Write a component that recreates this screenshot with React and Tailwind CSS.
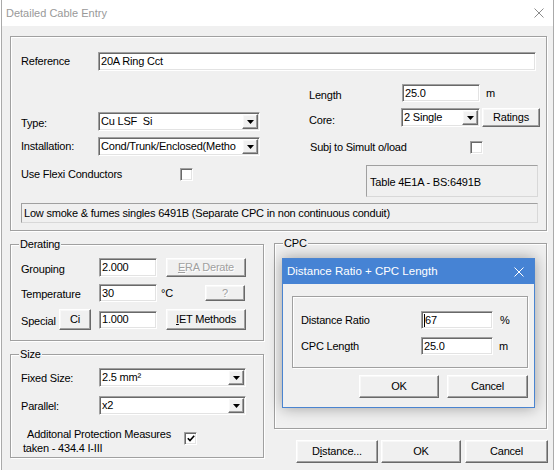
import React from 'react';

// classic win32 look: sunken fields, raised buttons, etched group boxes
const sunken =
  'bg-white border border-t-[#a0a0a0] border-l-[#a0a0a0] border-r-white border-b-white shadow-[inset_1px_1px_0_#696969,inset_-1px_-1px_0_#e3e3e3]';
const raised =
  'bg-[#f0f0f0] border border-t-white border-l-white border-r-[#696969] border-b-[#696969] shadow-[inset_-1px_-1px_0_#a0a0a0,inset_1px_1px_0_#f8f8f8]';
const etched = 'border border-[#a0a0a0] shadow-[inset_1px_1px_0_#ffffff,1px_1px_0_#ffffff]';
const staticEdge = 'border border-t-[#a0a0a0] border-l-[#a0a0a0] border-r-[#d8d8d8] border-b-[#d8d8d8]';

const Field = ({ className = '', children }) => (
  <div className={`flex items-center pl-[2px] whitespace-pre overflow-hidden shrink-0 ${sunken} ${className}`}>
    {children}
  </div>
);

const Btn = ({ className = '', disabled, children }) => (
  <div
    className={`flex items-center justify-center shrink-0 whitespace-nowrap ${raised} ${
      disabled ? 'text-[#a0a0a0] [text-shadow:1px_1px_0_#ffffff]' : ''
    } ${className}`}
  >
    {children}
  </div>
);

const Arrow = () => (
  <svg width="7" height="4" viewBox="0 0 7 4">
    <path d="M0 0h7L3.5 4z" fill="#000" />
  </svg>
);

const Combo = ({ className = '', children }) => (
  <div className={`flex p-[1px] shrink-0 ${sunken} ${className}`}>
    <div className="flex-1 flex items-center pl-[1px] whitespace-pre overflow-hidden">{children}</div>
    <div className={`w-[16px] flex items-center justify-center ${raised}`}>
      <Arrow />
    </div>
  </div>
);

const Check = ({ checked }) => (
  <div className={`w-[13px] h-[13px] shrink-0 flex items-center justify-center ${sunken}`}>
    {checked && (
      <svg width="8" height="7" viewBox="0 0 8 7">
        <path d="M0.8 3.2 L3 5.6 L7.2 0.8" stroke="#000" strokeWidth="1.6" fill="none" />
      </svg>
    )}
  </div>
);

const Group = ({ label, className = '', children }) => (
  <div className={`relative shrink-0 ${etched} ${className}`}>
    {label && (
      <span className="absolute left-[8px] top-[-7px] px-[1px] leading-[13px] bg-[#f0f0f0]">{label}</span>
    )}
    {children}
  </div>
);

const CloseX = ({ color }) => (
  <svg width="10" height="10" viewBox="0 0 10 10">
    <path d="M0.5 0.5 L9.5 9.5 M9.5 0.5 L0.5 9.5" stroke={color} strokeWidth="1" fill="none" />
  </svg>
);

// Distance Ratio popup sits over the CPC box
const DistancePopup = () => (
  <div className="absolute left-[282px] top-[258px] w-[253px] h-[150px] flex flex-col bg-[#f0f0f0] border border-[#4a84d0] shadow-[0_0_14px_rgba(0,0,0,0.35)]">
    <div className="h-[25px] shrink-0 flex items-center justify-between pl-[4px] pr-[10px] bg-[#4683d4] text-white text-[11.5px] tracking-normal">
      <span>Distance Ratio + CPC Length</span>
      <CloseX color="#ffffff" />
    </div>
    <Group className="mt-[12px] ml-[9px] w-[236px] h-[72px] pt-[14px] pl-[8px]">
      <div className="flex items-center h-[18px]">
        <span className="w-[120px]">Distance Ratio</span>
        <Field className="w-[72px] h-[18px]">
          <span className="w-[1px] h-[13px] bg-black" />
          67
        </Field>
        <span className="ml-[7px]">%</span>
      </div>
      <div className="flex items-center h-[18px] mt-[8px]">
        <span className="w-[120px]">CPC Length</span>
        <Field className="w-[72px] h-[18px]">25.0</Field>
        <span className="ml-[6px]">m</span>
      </div>
    </Group>
    <div className="flex mt-[7px] ml-[76px]">
      <Btn className="w-[80px] h-[23px]">OK</Btn>
      <Btn className="ml-[8px] w-[81px] h-[23px]">Cancel</Btn>
    </div>
  </div>
);

export default function App() {
  return (
    <div className="relative w-[555px] h-[470px] overflow-hidden bg-white text-[11px] leading-[13px] tracking-[-0.2px] text-black font-['Liberation_Sans',Arial,sans-serif]">
      <div className="ml-[1px] w-[553px] h-full flex flex-col border-x border-[#aaaaaa]">
        {/* title bar */}
        <div className="h-[26px] shrink-0 flex items-center justify-between pl-[4px] pr-[9px] text-[#999999] text-[11px] tracking-normal">
          <span>Detailed Cable Entry</span>
          <CloseX color="#8c8c8c" />
        </div>

        <div className="flex-1 bg-[#f0f0f0] pl-[8px] pt-[10px]">
          {/* cable details */}
          <Group className="w-[537px] h-[195px] pt-[15px] pl-[10px]">
            <div className="flex items-center h-[19px]">
              <span className="w-[77px]">Reference</span>
              <Field className="w-[438px] h-[19px]">20A Ring Cct</Field>
            </div>

            <div className="flex items-start">
              <div className="w-[239px] shrink-0">
                <div className="flex items-center h-[19px] mt-[41px]">
                  <span className="w-[77px] pt-[3px]">Type:</span>
                  <Combo className="w-[162px] h-[19px]">Cu LSF  Si</Combo>
                </div>
                <div className="flex items-center h-[19px] mt-[6px]">
                  <span className="w-[77px]">Installation:</span>
                  <Combo className="w-[162px] h-[19px]">Cond/Trunk/Enclosed(Metho</Combo>
                </div>
                <div className="flex items-center h-[13px] mt-[12px]">
                  <span className="w-[159px]">Use Flexi Conductors</span>
                  <Check />
                </div>
              </div>

              <div className="ml-[49px] w-[231px] shrink-0">
                <div className="flex items-center h-[18px] mt-[13px]">
                  <span className="w-[93px] pt-[5px]">Length</span>
                  <Field className="w-[78px] h-[18px]">25.0</Field>
                  <span className="ml-[6px]">m</span>
                </div>
                <div className="flex items-center h-[19px] mt-[6px]">
                  <span className="w-[93px] pt-[5px]">Core:</span>
                  <Combo className="w-[79px] h-[19px]">2 Single</Combo>
                  <Btn className="ml-[2px] w-[58px] h-[19px]">Ratings</Btn>
                </div>
                <div className="flex items-center h-[13px] mt-[14px]">
                  <span className="w-[161px] pl-[1px]">Subj to Simult o/load</span>
                  <Check />
                </div>
                <div className={`mt-[11px] ml-[57px] w-[172px] h-[32px] flex items-center pl-[3px] pt-[2px] ${staticEdge}`}>
                  Table 4E1A - BS:6491B
                </div>
              </div>
            </div>

            <div className={`mt-[6px] w-[517px] h-[20px] flex items-center pl-[2px] whitespace-nowrap ${staticEdge}`}>
              Low smoke &amp; fumes singles 6491B (Separate CPC in non continuous conduit)
            </div>
          </Group>

          <div className="flex">
            {/* left: derating + size */}
            <div className="w-[254px] shrink-0">
              <Group label="Derating" className="mt-[13px] w-[254px] h-[97px] pt-[13px] pl-[10px]">
                <div className="flex items-center h-[19px]">
                  <span className="w-[78px] pt-[3px]">Grouping</span>
                  <Field className="w-[58px] h-[19px]">2.000</Field>
                  <Btn disabled className="ml-[9px] w-[80px] h-[19px]">
                    <u>E</u>RA Derate
                  </Btn>
                </div>
                <div className="flex items-center h-[18px] mt-[7px]">
                  <span className="w-[78px] pt-[3px]">Temperature</span>
                  <Field className="w-[58px] h-[18px]">30</Field>
                  <span className="ml-[4px] w-[44px]">°C</span>
                  <Btn disabled className="w-[40px] h-[16px]">?</Btn>
                </div>
                <div className="flex items-center h-[21px] mt-[7px]">
                  <span className="w-[38px] pt-[3px]">Special</span>
                  <Btn className="w-[32px] h-[21px]">Ci</Btn>
                  <Field className="ml-[8px] w-[58px] h-[18px]">1.000</Field>
                  <Btn className="ml-[9px] w-[80px] h-[21px]">
                    <u>I</u>ET Methods
                  </Btn>
                </div>
              </Group>

              <Group label="Size" className="mt-[13px] w-[254px] h-[104px] pt-[13px] pl-[10px]">
                <div className="flex items-center h-[19px]">
                  <span className="w-[78px] pt-[2px]">Fixed Size:</span>
                  <Combo className="w-[147px] h-[19px]">2.5 mm²</Combo>
                </div>
                <div className="flex items-center h-[19px] mt-[9px]">
                  <span className="w-[78px] pt-[2px]">Parallel:</span>
                  <Combo className="w-[147px] h-[19px]">x2</Combo>
                </div>
                <div className="flex items-start mt-[12px]">
                  <div className="w-[163px] pl-[2px] leading-[14px]">
                    <div className="pl-[4px]">Additonal Protection Measures</div>
                    <div>taken - 434.4 I-III</div>
                  </div>
                  <div className="mt-[5px]">
                    <Check checked />
                  </div>
                </div>
              </Group>
            </div>

            {/* right: cpc + dialog buttons */}
            <div className="ml-[10px] w-[273px] shrink-0">
              <Group label="CPC" className="mt-[12px] w-[273px] h-[186px]" />
              <div className="flex mt-[11px] ml-[22px]">
                <Btn className="w-[82px] h-[23px] border-[#696969]">
                  D<u>i</u>stance...
                </Btn>
                <Btn className="ml-[3px] w-[80px] h-[23px]">OK</Btn>
                <Btn className="ml-[4px] w-[83px] h-[23px]">Cancel</Btn>
              </div>
            </div>
          </div>
        </div>
      </div>

      <DistancePopup />
    </div>
  );
}
